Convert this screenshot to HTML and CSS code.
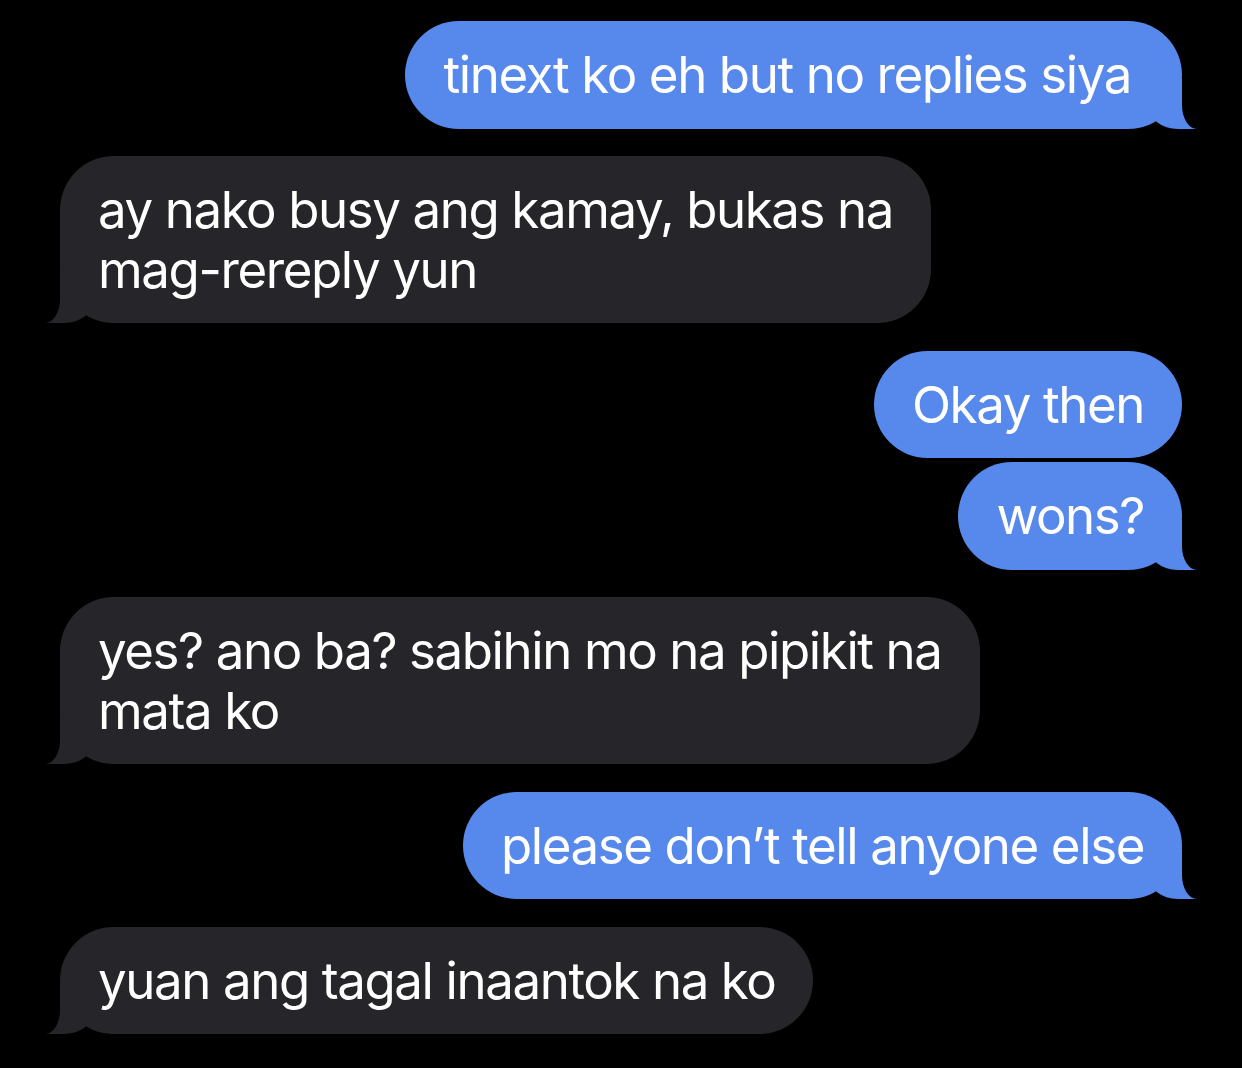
FILE: index.html
```html
<!DOCTYPE html>
<html lang="tl">
<head>
  <meta charset="UTF-8">
  <meta name="viewport" content="width=device-width, initial-scale=1.0">
  <title>Messages</title>
  <link rel="stylesheet" href="styles.css">
</head>
<body>

  <!-- Thread -->
  <div class="thread">
    <div class="bubble sent tail">tinext ko eh but no replies siya&nbsp;</div>

    <div class="bubble received tail">ay nako busy ang kamay, bukas na<br>mag-rereply yun</div>

    <div class="group">
      <div class="bubble sent">Okay then</div>
      <div class="bubble sent tail">wons?</div>
    </div>

    <div class="bubble received tail">yes? ano ba? sabihin mo na pipikit na<br>mata ko</div>

    <div class="bubble sent tail">please don’t tell anyone else</div>

    <div class="bubble received tail">yuan ang tagal inaantok na ko</div>
  </div>

</body>
</html>
```

FILE: styles.css
```css
body {
  margin: 0;
  padding: 0;
  background: #000;
  font-family: Inter, 'Noto Sans', Arial, sans-serif;
}

/* Danh sách tin nhắn */
.thread {
  display: flex;
  flex-direction: column;
  gap: 27.5px;
  padding: 21px 60px 0 60px;
}
.group {
  display: flex;
  flex-direction: column;
  gap: 4px;
}

/* Bong bóng */
.bubble {
  position: relative;
  padding: 24px 38px;
  border-radius: 54px;
  font-size: 51px;
  line-height: 59.5px;
  letter-spacing: -1.4px;
  color: #fff;
  white-space: nowrap;
}
.sent {
  align-self: flex-end;
  background: #5788EB;
}
.received {
  align-self: flex-start;
  background: #26262A;
}

/* Đuôi bong bóng */
.tail::before, .tail::after {
  content: "";
  position: absolute;
  bottom: 0;
  height: 50px;
}
.sent.tail::before {
  right: -15px;
  width: 49px;
  background: #5788EB;
  border-bottom-left-radius: 30px 24px;
}
.sent.tail::after {
  right: -20px;
  width: 20px;
  background: #000;
  border-bottom-left-radius: 15px 24px;
}
.received.tail::before {
  left: -15px;
  width: 49px;
  background: #26262A;
  border-bottom-right-radius: 30px 24px;
}
.received.tail::after {
  left: -20px;
  width: 20px;
  background: #000;
  border-bottom-right-radius: 15px 24px;
}
```
